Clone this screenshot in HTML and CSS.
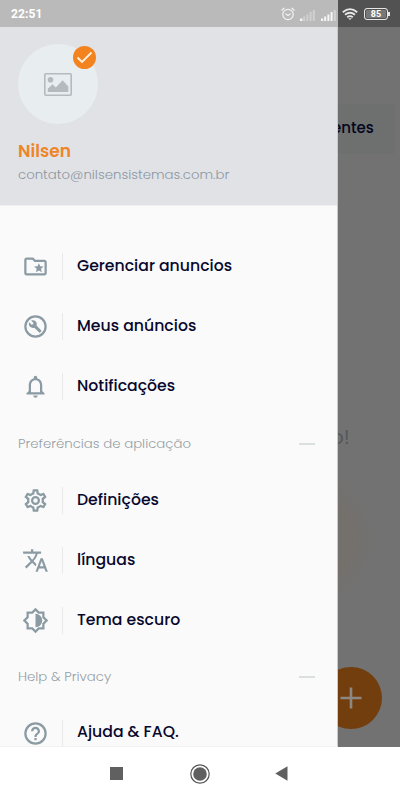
FILE: index.html
```html
<!DOCTYPE html>
<html lang="pt-BR">
<head>
<meta charset="utf-8">
<title>Menu</title>
<link rel="stylesheet" href="styles.css">
</head>
<body>
<div class="phone">
  <header class="status">
    <div class="status-main">
      <span class="clock">22:51</span>
      <svg class="alarm" viewBox="0 0 14 14" width="14" height="14" fill="none" stroke="#f2f2f2" stroke-width="1.2" stroke-linecap="round"><circle cx="7" cy="7.5" r="5.2"/><path d="M.8 3.2 3 1.2M13.2 3.2 11 1.2M4.8 7 7 8.6 9.2 7"/></svg>
      <svg class="signal" viewBox="0 0 16 12" width="16" height="12" fill="#d0d0d0"><path fill="#f5f5f5" d="M0 9.5h2.4V12H0z"/><path d="M3.2 7.5h2V12h-2zM6.4 5.5h2V12h-2zM9.6 3h2v9h-2zM12.8 1h2v11h-2z"/></svg>
      <svg class="signal" viewBox="0 0 16 12" width="16" height="12" fill="#f5f5f5"><path d="M0 9.5h2.2V12H0zM3.2 7.5h2V12h-2zM6.4 5.5h2V12h-2zM9.6 3h2v9h-2z"/><path fill="#d3d3d3" d="M12.8 1h2v11h-2z"/></svg>
    </div>
    <div class="status-side">
      <svg viewBox="0 0 16 12" width="16" height="12" fill="none" stroke="#e6e6e6" stroke-width="1.8"><path d="M.8 4.2Q8-2 15.2 4.2M3 6.8Q8 2.6 13 6.8M5.2 9.2Q8 7 10.8 9.2"/><path fill="#e6e6e6" stroke="none" d="M6.2 10.2h3.6L8 12z"/></svg>
      <span class="battery">85</span>
    </div>
  </header>
  <div class="screen">
    <main class="drawer">
      <section class="profile">
        <div class="avatar">
          <svg viewBox="0 0 28 23" width="28" height="23"><rect x=".8" y=".8" width="26.4" height="21.4" rx="1" fill="none" stroke="#b4babd" stroke-width="1.6"/><circle cx="6.5" cy="6.8" r="2.8" fill="#b4babd"/><path fill="#b4babd" d="M3.8 19v-3.2l4.7-4.5 3.3 3.2 6.8-7.3 5.7 6.4V19z"/></svg>
          <span class="badge"><svg viewBox="0 0 23 23" width="23" height="23" fill="none" stroke="#fff1df" stroke-width="1.9"><path d="m4.500 11.500 4.500 4.500 9.500-9.500"/></svg></span>
        </div>
        <h1 class="name">Nilsen</h1>
        <p class="email">contato@nilsensistemas.com.br</p>
      </section>
      <nav class="menu">
        <a class="row"><svg class="icon" viewBox="0 0 24 24"><path d="M20 6h-8l-2-2H4c-1.100 0-2 .9-2 2v12c0 1.100.9 2 2 2h16c1.100 0 2-.9 2-2V8c0-1.100-.9-2-2-2zm0 12H4V6h5.170l2 2H20v10zm-6.920-3.960L12.390 17 15 15.470 17.610 17l-.69-2.960 2.300-1.990-3.030-.26L15 9l-1.190 2.790-3.030.26z"/></svg><span class="label">Gerenciar anuncios</span></a>
        <a class="row"><svg class="icon" viewBox="0 0 24 24"><path d="M12 2a10 10 0 1 0 0 20 10 10 0 0 0 0-20zm0 18a8 8 0 1 1 0-16 8 8 0 0 1 0 16z"/><path d="m17.200 15.500-4.300-4.300c.5-1.300.2-2.800-.8-3.800-1.100-1.100-2.700-1.300-4-.7l2.300 2.300-1.600 1.600-2.300-2.300c-.7 1.300-.4 2.900.7 4 1 1 2.500 1.300 3.800.8l4.300 4.300c.2.2.5.2.7 0l1.200-1.200c.2-.2.2-.5 0-.7z"/></svg><span class="label">Meus anúncios</span></a>
        <a class="row"><svg class="icon" viewBox="0 0 24 24"><path d="M12 22c1.100 0 2-.9 2-2h-4c0 1.100.9 2 2 2zm6-6v-5c0-3.070-1.630-5.640-4.500-6.320V4c0-.83-.67-1.500-1.500-1.500s-1.500.67-1.500 1.500v.68C7.640 5.360 6 7.920 6 11v5l-2 2v1h16v-1l-2-2zm-2 1H8v-6c0-2.480 1.510-4.500 4-4.500s4 2.020 4 4.500v6z"/></svg><span class="label">Notificações</span></a>
        <div class="heading heading-prefs"><span>Preferências de aplicação</span><i class="dash"></i></div>
        <a class="row"><svg class="icon" viewBox="0 0 24 24"><path d="M19.430 12.980c.04-.32.070-.64.070-.98s-.03-.66-.07-.98l2.110-1.650c.19-.15.240-.42.120-.64l-2-3.460c-.09-.16-.26-.25-.44-.25-.06 0-.12.010-.17.030l-2.490 1c-.52-.4-1.080-.73-1.690-.98l-.38-2.650C14.460 2.180 14.250 2 14 2h-4c-.25 0-.46.180-.49.420l-.38 2.650c-.61.250-1.170.590-1.690.98l-2.490-1c-.06-.02-.12-.03-.18-.03-.17 0-.34.090-.43.250l-2 3.460c-.13.220-.07.490.12.640l2.110 1.650c-.04.320-.07.650-.07.980s.03.660.07.980l-2.110 1.650c-.19.150-.24.420-.12.640l2 3.460c.09.160.26.250.44.250.06 0 .12-.01.170-.03l2.490-1c.52.4 1.080.730 1.690.980l.38 2.650c.03.240.24.420.49.420h4c.25 0 .46-.18.49-.42l.38-2.650c.61-.25 1.170-.59 1.690-.98l2.490 1c.06.020.12.030.18.030.17 0 .34-.09.430-.25l2-3.460c.12-.22.070-.49-.12-.64l-2.110-1.650zm-1.980-1.710c.04.310.05.520.05.730s-.02.430-.05.730l-.14 1.130.89.7 1.080.840-.7 1.210-1.270-.51-1.040-.42-.9.680c-.43.320-.84.560-1.250.730l-1.060.430-.16 1.130-.2 1.350h-1.400l-.19-1.350-.16-1.130-1.060-.43c-.43-.18-.83-.41-1.230-.71l-.91-.7-1.060.430-1.270.510-.7-1.210 1.080-.84.890-.7-.14-1.130c-.03-.31-.05-.54-.05-.74s.02-.43.050-.73l.14-1.130-.89-.7-1.080-.84.700-1.210 1.270.510 1.040.420.900-.68c.43-.32.840-.56 1.250-.73l1.060-.43.160-1.130.200-1.350h1.390l.19 1.350.16 1.130 1.060.430c.43.180.83.410 1.230.710l.91.700 1.060-.43 1.270-.51.700 1.210-1.070.850-.89.700.14 1.130z"/><path d="M12 8a4 4 0 1 0 0 8 4 4 0 0 0 0-8zm0 6a2 2 0 1 1 0-4 2 2 0 0 1 0 4z"/></svg><span class="label">Definições</span></a>
        <a class="row"><svg class="icon" viewBox="0 0 24 24"><path d="m12.870 15.070-2.540-2.510.030-.03A17.520 17.520 0 0 0 14.070 6H17V4h-7V2H8v2H1v1.990h11.170C11.500 7.920 10.440 9.750 9 11.350 8.070 10.320 7.300 9.190 6.690 8h-2c.73 1.630 1.730 3.170 2.980 4.560l-5.090 5.020L4 19l5-5 3.110 3.110.760-2.040zM18.500 10h-2L12 22h2l1.120-3h4.750L21 22h2l-4.500-12zm-2.620 7 1.620-4.330L19.120 17h-3.240z"/></svg><span class="label">línguas</span></a>
        <a class="row"><svg class="icon" viewBox="0 0 24 24"><path d="M20 8.690V4h-4.690L12 .69 8.690 4H4v4.690L.69 12 4 15.310V20h4.690L12 23.310 15.310 20H20v-4.690L23.310 12 20 8.690zm-2 5.790V18h-3.520L12 20.480 9.520 18H6v-3.520L3.520 12 6 9.520V6h3.520L12 3.520 14.480 6H18v3.520L20.480 12 18 14.480z"/><path d="M12 6v12a6 6 0 0 0 0-12z"/></svg><span class="label">Tema escuro</span></a>
        <div class="heading"><span>Help &amp; Privacy</span><i class="dash"></i></div>
        <a class="row"><svg class="icon" viewBox="0 0 24 24"><path d="M11 18h2v-2h-2v2zm1-16a10 10 0 1 0 0 20 10 10 0 0 0 0-20zm0 18a8 8 0 1 1 0-16 8 8 0 0 1 0 16zm0-14c-2.210 0-4 1.790-4 4h2c0-1.100.9-2 2-2s2 .9 2 2c0 2-3 1.750-3 5h2c0-2.250 3-2.500 3-5 0-2.210-1.790-4-4-4z"/></svg><span class="label label-last">Ajuda &amp; FAQ.</span></a>
      </nav>
    </main>
    <aside class="behind">
      <div class="chip">entes</div>
      <div class="message">o!</div>
      <div class="glow"></div>
      <div class="fab"><svg viewBox="0 0 22 22" width="22" height="22" stroke="#8c8781" stroke-width="2.600"><path d="M11 .5v21M.5 11h21"/></svg></div>
    </aside>
  </div>
  <footer class="navbar">
    <i class="square"></i>
    <svg viewBox="0 0 20 20" width="20" height="20"><circle cx="10" cy="10" r="9.200" fill="none" stroke="#555" stroke-width="1.200"/><circle cx="10" cy="10" r="6.800" fill="#606060"/></svg>
    <svg viewBox="0 0 13 15" width="13" height="15"><path fill="#606060" d="M12.500.3v14.400L.3 7.500z"/></svg>
  </footer>
</div>
</body>
</html>
```

FILE: styles.css
```css
* { box-sizing: border-box; }
body { margin: 0; font-family: Poppins, Inter, sans-serif; }
.phone { width: 400px; height: 800px; display: flex; flex-direction: column; overflow: hidden; background: #fff; }

.status { display: flex; height: 27px; flex: none; }
.status-main { width: 338px; background: #bababa; display: flex; align-items: center; padding-left: 11px; }
.clock { font: 700 12px Roboto, sans-serif; color: #fff; letter-spacing: .1px; }
.alarm { margin-left: auto; margin-right: 5px; }
.signal { margin-right: 5px; margin-top: 2px; }
.signal:last-child { margin-right: 1px; }
.status-side { flex: 1; background: #525252; display: flex; align-items: center; padding-left: 4px; gap: 6px; }
.battery { position: relative; width: 24px; height: 12px; border: 1.5px solid #e6e6e6; border-radius: 3px; background: #777; box-shadow: inset 0 0 0 1px #525252; color: #fff; font: 700 9px/10px Roboto, sans-serif; text-align: center; }
.battery::after { content: ""; position: absolute; right: -3px; top: 3px; width: 2px; height: 4px; background: #e6e6e6; }

.screen { display: flex; height: 720px; flex: none; }
.drawer { width: 338px; flex: none; background: #fafafa; overflow: hidden; border-right: 1px solid #c9c9c9; border-bottom: 1px solid #f2f2f2; }
.profile { height: 179px; background: #e1e2e6; padding: 17px 18px 0; border-bottom: 1px solid #eeeff3; }
.avatar { position: relative; width: 80px; height: 80px; border-radius: 50%; background: #e8edf0; display: flex; align-items: center; justify-content: center; }
.badge { position: absolute; right: 2px; top: 2px; width: 23px; height: 23px; border-radius: 50%; background: #f2831f; }
.badge svg { display: block; }
.name { margin: 15px 0 0; font-size: 17px; line-height: 25px; font-weight: 600; color: #ee8526; }
.email { margin: 0; font-size: 13.3px; line-height: 22px; font-weight: 300; color: #8b97a2; white-space: nowrap; }

.menu { padding-top: 30px; }
.row { display: flex; align-items: center; height: 60px; padding-left: 22px; }
.icon { width: 27px; height: 27px; fill: #8b9ba3; flex: none; }
.label { margin-left: 13px; padding: 0 0 2px 14px; height: 27px; line-height: 25px; border-left: 1px solid #e8e9eb; font-size: 15.7px; font-weight: 500; color: #08082d; white-space: nowrap; }
.label-last { line-height: 23px; }
.heading { display: flex; justify-content: space-between; align-items: center; height: 53px; padding: 0 22px 0 18px; font-size: 13.3px; font-weight: 300; color: #969fa6; white-space: nowrap; }
.heading-prefs { height: 54px; padding-top: 1px; }
.dash { width: 16px; height: 2px; background: #dcdfe0; }

.behind { flex: 1; background: #727272; overflow: hidden; display: flex; flex-direction: column; }
.chip { height: 50px; width: 57px; flex: none; margin-top: 77px; border-radius: 0 4px 4px 0; background: #6d706f; color: #05051c; font-size: 15px; font-weight: 500; line-height: 47px; text-indent: -6px; }
.message { margin-top: 268px; height: 30px; margin-left: -7px; color: #56585b; font-size: 20px; font-weight: 400; line-height: 30px; }
.glow { width: 130px; height: 140px; margin: 17px 0 0 -92px; border-radius: 50%; background: radial-gradient(closest-side, #74706c 60%, #727272); flex: none; }
.fab { width: 62px; height: 62px; flex: none; border-radius: 50%; background: #733e0e; margin: 58px 0 0 -18px; display: flex; align-items: center; justify-content: center; }

.navbar { height: 53px; display: flex; align-items: center; padding-left: 110px; background: #fff; }
.square { width: 13px; height: 13px; background: #606060; margin-right: 67px; }
.navbar svg + svg { margin-left: 65px; }
```
